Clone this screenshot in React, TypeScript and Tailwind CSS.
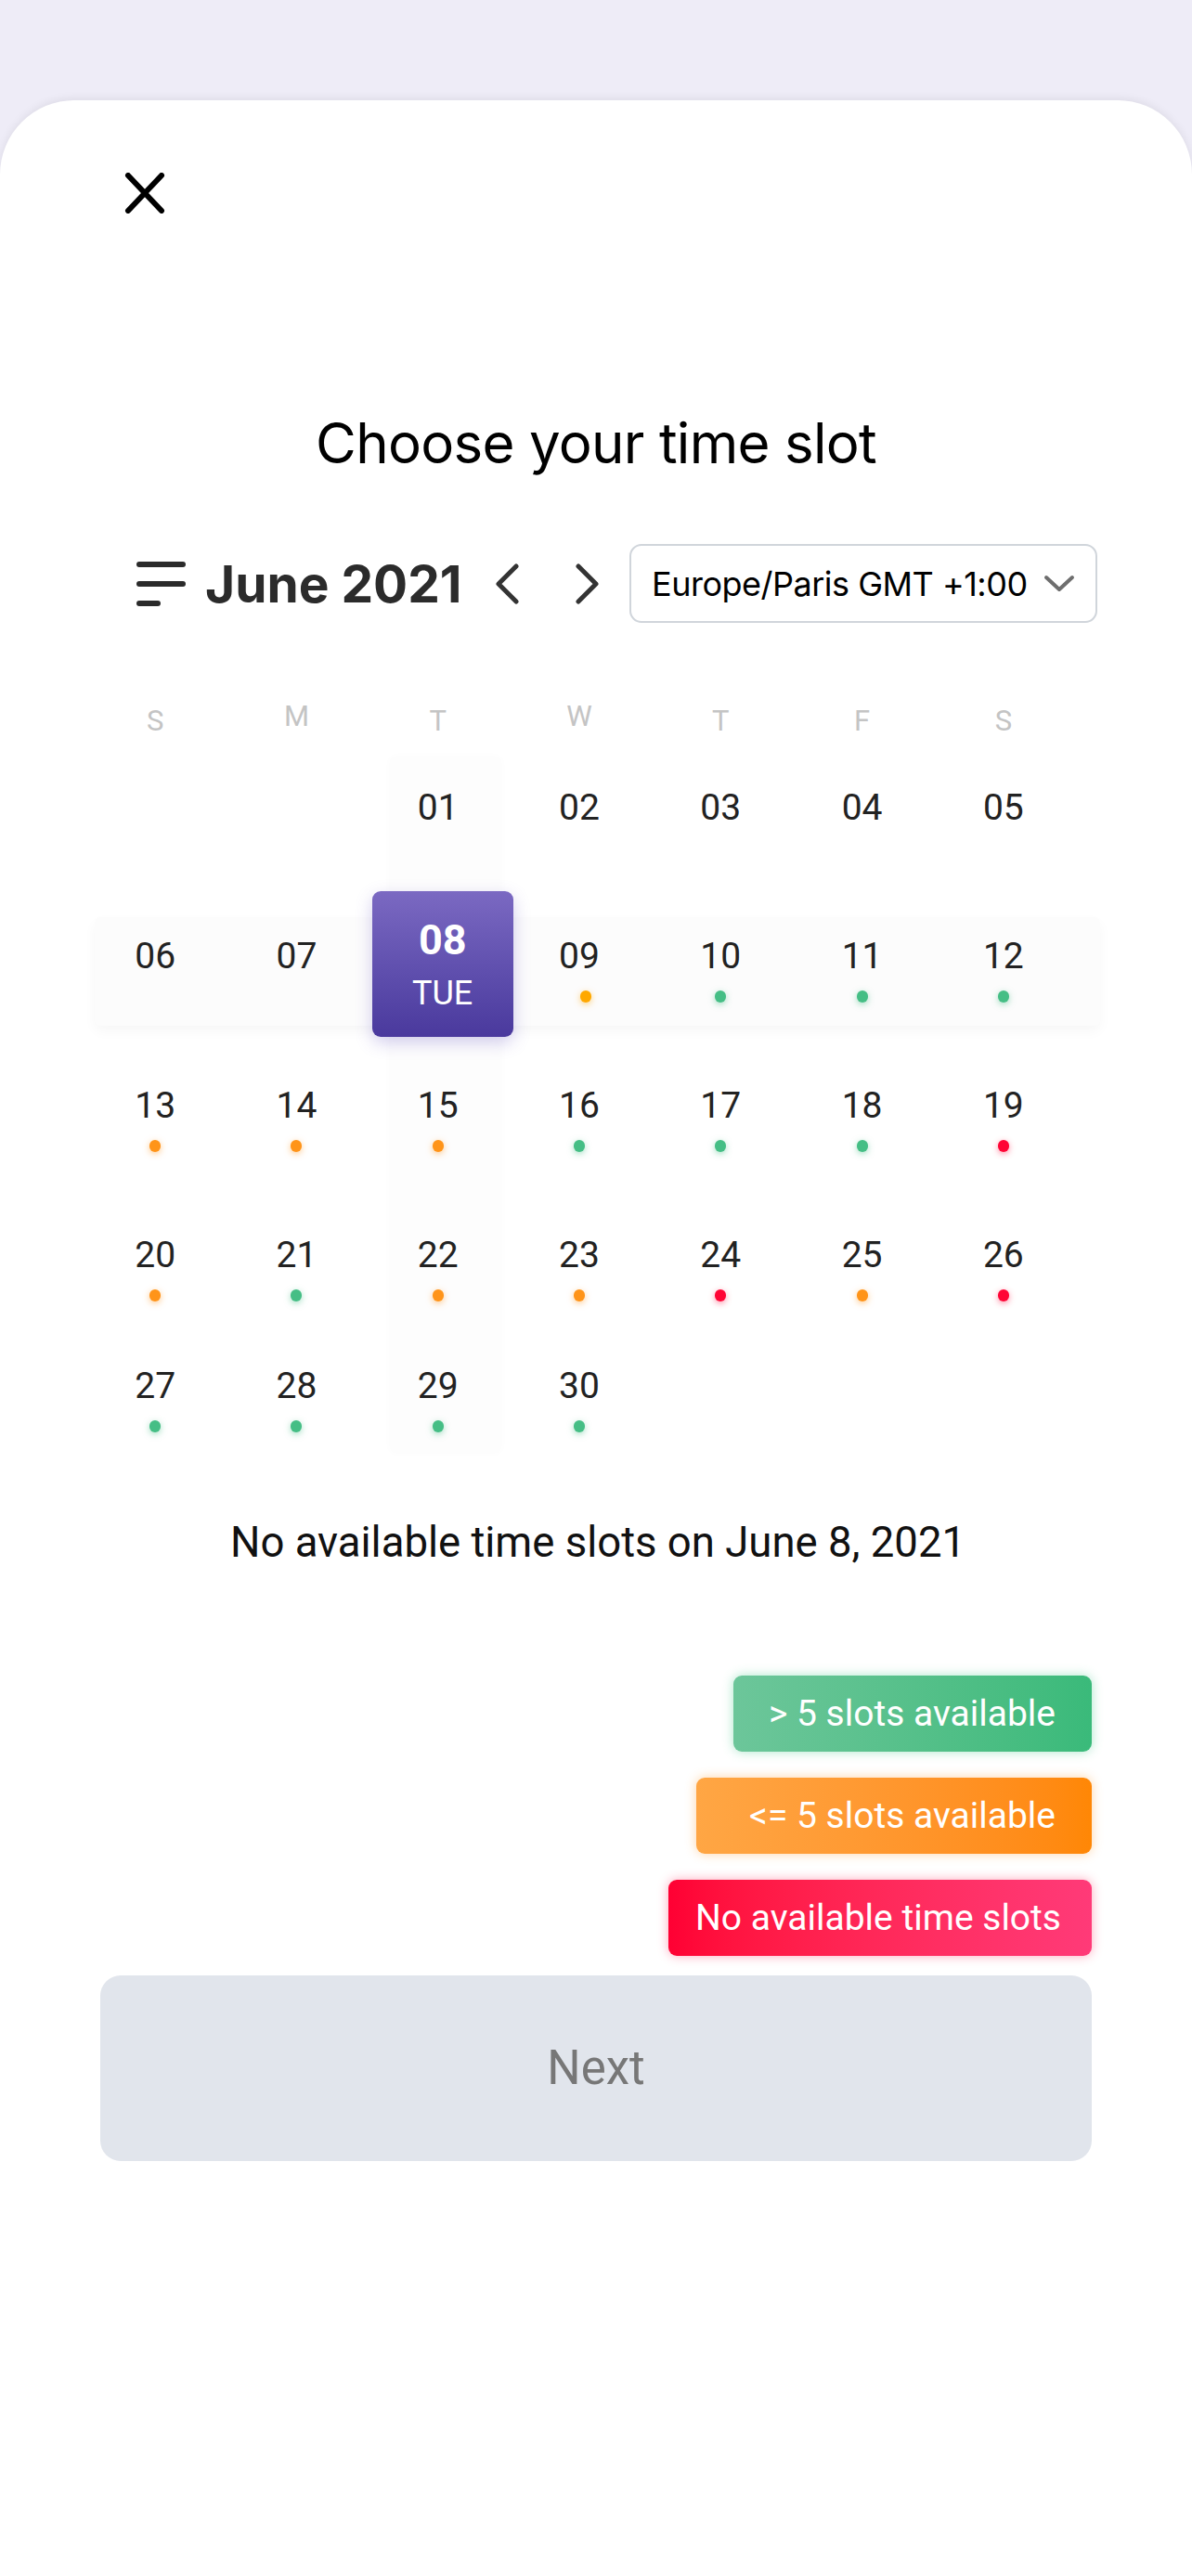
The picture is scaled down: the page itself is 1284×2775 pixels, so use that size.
import React from "react";

type Dot = "g" | "o" | "y" | "r";

const dotStyles: Record<Dot, string> = {
  g: "bg-[#45be85] shadow-[0_2px_7px_rgba(69,190,133,0.5)]",
  o: "bg-[#ff9419] shadow-[0_2px_7px_rgba(255,148,25,0.5)]",
  y: "bg-[#ffa800] shadow-[0_2px_7px_rgba(255,168,0,0.5)]",
  r: "bg-[#ff0535] shadow-[0_2px_7px_rgba(255,5,53,0.45)]",
};

const dots: Record<number, Dot> = {
  9: "y",
  10: "g",
  11: "g",
  12: "g",
  13: "o",
  14: "o",
  15: "o",
  16: "g",
  17: "g",
  18: "g",
  19: "r",
  20: "o",
  21: "g",
  22: "o",
  23: "o",
  24: "r",
  25: "o",
  26: "r",
  27: "g",
  28: "g",
  29: "g",
  30: "g",
};

const weeks: (number | null)[][] = [
  [null, null, 1, 2, 3, 4, 5],
  [6, 7, 8, 9, 10, 11, 12],
  [13, 14, 15, 16, 17, 18, 19],
  [20, 21, 22, 23, 24, 25, 26],
  [27, 28, 29, 30, null, null, null],
];

const rowHeights = ["h-[160px]", "h-[161px]", "h-[161px]", "h-[141px]", "h-[90px]"];

const weekdays = ["S", "M", "T", "W", "T", "F", "S"];

function DayCell({ day }: { day: number | null }) {
  if (day === null) return <div />;
  if (day === 8) {
    return (
      <div className="flex justify-center">
        <div className="-mt-[47px] translate-x-[5px] w-[157px] h-[157px] rounded-[9px] bg-linear-to-b from-[#7b69c2] to-[#4a399d] shadow-[0_6px_18px_rgba(95,75,190,0.28)] flex flex-col items-center text-white">
          <span className="mt-[27px] text-[45px] leading-[52px] font-bold">08</span>
          <span className="mt-[10px] text-[36px] leading-[42px]">TUE</span>
        </div>
      </div>
    );
  }
  const dot = dots[day];
  return (
    <div className="flex flex-col items-center">
      <span className="text-[39px] leading-[46px] text-[#222]">{String(day).padStart(2, "0")}</span>
      {dot && (
        <span
          className={`mt-[14px] w-[12px] h-[13px] rounded-full ${dotStyles[dot]} ${day === 9 ? "translate-x-[7px]" : ""}`}
        />
      )}
    </div>
  );
}

export default function App() {
  return (
    <div className="min-h-[2775px] bg-[#eeecf7] pt-[108px] font-['Roboto',sans-serif]">
      <div className="min-h-[2667px] bg-white rounded-t-[80px] shadow-[0_-2px_10px_rgba(0,0,0,0.07)] pt-[78px]">
        {/* close */}
        <div className="pl-[133px]">
          <svg width="46" height="44" viewBox="0 0 46 44" fill="none" stroke="#000" strokeWidth={6} strokeLinecap="round">
            <path d="M5 3 L41 41 M41 3 L5 41" />
          </svg>
        </div>

        <h1 className="mt-[211px] text-center text-[60px] leading-[72px] tracking-[-0.7px] text-black font-['Inter',sans-serif]">
          Choose your time slot
        </h1>

        {/* month + timezone */}
        <div className="mt-[73px] h-[85px] flex items-center pl-[147px] pr-[102px] font-['Inter',sans-serif]">
          <svg width="53" height="48" viewBox="0 0 53 48" fill="none" stroke="#2b2b2b" strokeWidth={6} strokeLinecap="round">
            <path d="M3 3 H50 M3 24 H50 M3 45 H23" />
          </svg>
          <span className="ml-[21px] text-[55px] leading-[64px] font-bold text-[#2b2b2b] whitespace-nowrap">June 2021</span>
          <svg className="ml-[34px]" width="28" height="44" viewBox="0 0 28 44" fill="none" stroke="#333" strokeWidth={5} strokeLinecap="round" strokeLinejoin="round">
            <path d="M24 3 L5 22 L24 41" />
          </svg>
          <svg className="ml-[59px]" width="28" height="44" viewBox="0 0 28 44" fill="none" stroke="#333" strokeWidth={5} strokeLinecap="round" strokeLinejoin="round">
            <path d="M4 3 L23 22 L4 41" />
          </svg>
          <div className="ml-auto w-[504px] h-[85px] rounded-[13px] border-2 border-[#d0d5db] flex items-center pl-[22px] pr-[22px]">
            <span className="text-[36px] leading-[46px] tracking-[-0.5px] text-black whitespace-nowrap">Europe/Paris GMT +1:00</span>
            <svg className="ml-auto shrink-0" width="34" height="20" viewBox="0 0 34 20" fill="none" stroke="#6e6e6e" strokeWidth={4} strokeLinecap="round" strokeLinejoin="round">
              <path d="M3 3 L17 16 L31 3" />
            </svg>
          </div>
        </div>

        {/* calendar */}
        <div className="relative mt-[88px] ml-[91px] w-[1066px]">
          <div className="absolute left-[329px] top-[56px] w-[120px] h-[750px] bg-[#fdfdfd] rounded-md shadow-[0_0_8px_rgba(0,0,0,0.02)]" />
          <div className="absolute left-[11px] top-[229px] w-[1083px] h-[117px] bg-[#fcfcfc] rounded-md shadow-[0_6px_14px_rgba(0,0,0,0.035)]" />

          <div className="relative grid grid-cols-7 h-[36px]">
            {weekdays.map((d, i) => (
              <span
                key={i}
                className={`text-center text-[31px] leading-[36px] text-[#c4c4c4] ${i === 1 || i === 3 ? "-translate-y-[5px]" : ""}`}
              >
                {d}
              </span>
            ))}
          </div>

          <div className="relative mt-[52px]">
            {weeks.map((week, wi) => (
              <div key={wi} className={`grid grid-cols-7 ${rowHeights[wi]}`}>
                {week.map((day, di) => (
                  <DayCell key={di} day={day} />
                ))}
              </div>
            ))}
          </div>
        </div>

        <p className="mt-[75px] pl-[4px] text-center text-[45.5px] leading-[54px] text-[#111]">
          No available time slots on June 8, 2021
        </p>

        {/* legend */}
        <div className="mt-[116px] flex flex-col items-end gap-[28px] pr-[108px] text-white text-[39px] leading-[46px]">
          <div className="w-[386px] h-[82px] rounded-[9px] bg-linear-to-r from-[#6cc69a] to-[#3aba7a] shadow-[0_0_12px_rgba(70,200,140,0.45)] flex items-center justify-end pr-[39px]">
            &gt; 5 slots available
          </div>
          <div className="w-[426px] h-[82px] rounded-[9px] bg-linear-to-r from-[#ffa644] to-[#ff8705] shadow-[0_0_12px_rgba(255,160,60,0.45)] flex items-center justify-end pr-[39px]">
            &lt;= 5 slots available
          </div>
          <div className="w-[456px] h-[82px] rounded-[9px] bg-linear-to-r from-[#ff0033] to-[#ff3a78] shadow-[0_0_12px_rgba(255,40,90,0.4)] flex items-center justify-end pr-[33px]">
            No available time slots
          </div>
        </div>

        <div className="mt-[21px] mx-[108px] h-[200px] rounded-[22px] bg-[#e1e5ec] flex items-center justify-center text-[51px] text-[#777]">
          Next
        </div>
      </div>
    </div>
  );
}
